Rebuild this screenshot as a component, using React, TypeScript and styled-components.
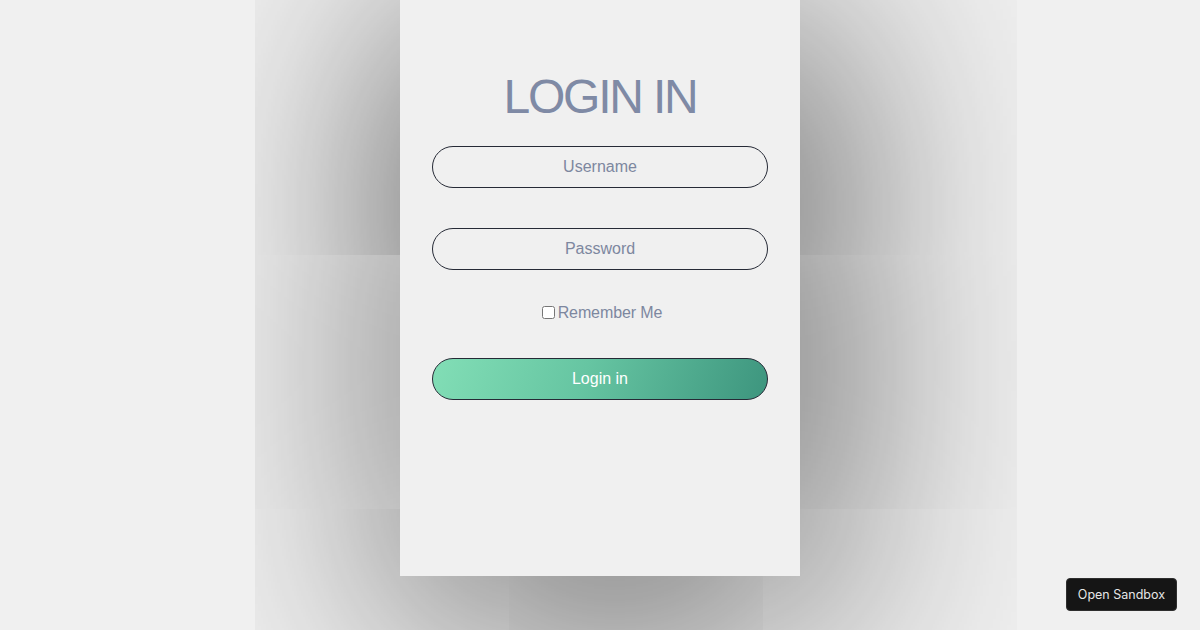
import React from "react";
import styled, { createGlobalStyle } from "styled-components";

const Global = createGlobalStyle`
  html, body { margin: 0; padding: 0; background: #f0f0f0; }
  body { font-family: "Liberation Sans", Arial, sans-serif; overflow: hidden; }
  * { box-sizing: border-box; }
`;

const Page = styled.div`
  width: 100%;
  height: 630px;
  display: flex;
  justify-content: center;
  align-items: flex-start;
  background: #f0f0f0;
`;

const Card = styled.form`
  width: 400px;
  height: 576px;
  background: #f0f0f0;
  box-shadow: 15px 30px 250px rgba(0, 0, 0, 0.8);
  padding: 68px 32px 0;
  display: flex;
  flex-direction: column;
  align-items: stretch;
`;

const Title = styled.h1`
  margin: 0 0 21px;
  font-family: "Liberation Sans", Arial, sans-serif;
  font-weight: 400;
  font-size: 48px;
  line-height: 57px;
  letter-spacing: -2.2px;
  color: #7f8aa5;
  text-align: center;
`;

const Field = styled.input`
  height: 42px;
  width: 100%;
  border: 1px solid #262a36;
  border-radius: 21px;
  background: transparent;
  font-family: "Liberation Sans", Arial, sans-serif;
  font-size: 16px;
  color: #4a5268;
  text-align: center;
  outline: none;
  margin: 0 0 ${(p: { $gap: number }) => p.$gap}px;
  &::placeholder { color: #7d879f; }
`;

const RememberRow = styled.label`
  display: flex;
  justify-content: center;
  align-items: center;
  height: 20px;
  margin: 0 0 35px;
  font-size: 16px;
  letter-spacing: -0.1px;
  color: #7d879f;
  font-family: "Liberation Sans", Arial, sans-serif;
`;

const Check = styled.input`
  width: 13px;
  height: 13px;
  margin: 0 3px 1px 4px;
`;

const Submit = styled.button`
  height: 42px;
  width: 100%;
  border: 1px solid #262a36;
  border-radius: 21px;
  background: linear-gradient(110deg, #82deb6 0%, #66c5a2 45%, #3d957e 100%);
  color: #ffffff;
  font-family: "Liberation Sans", Arial, sans-serif;
  font-size: 16px;
  cursor: pointer;
`;

const SandboxButton = styled.a`
  position: fixed;
  right: 23px;
  bottom: 19px;
  height: 33px;
  padding: 0 11px;
  display: flex;
  align-items: center;
  background: #151515;
  border: 1px solid #2e2e2e;
  border-radius: 4px;
  color: #e6e6e6;
  font-family: Inter, "Liberation Sans", sans-serif;
  font-size: 12.5px;
  text-decoration: none;
`;

export default function App() {
  return (
    <>
      <Global />
      <Page>
        <Card onSubmit={(e) => e.preventDefault()}>
          <Title>LOGIN IN</Title>
          <Field $gap={40} type="text" placeholder="Username" />
          <Field $gap={33} type="password" placeholder="Password" />
          <RememberRow>
            <Check type="checkbox" />
            Remember Me
          </RememberRow>
          <Submit type="submit">Login in</Submit>
        </Card>
      </Page>
      <SandboxButton href="#">Open Sandbox</SandboxButton>
    </>
  );
}
